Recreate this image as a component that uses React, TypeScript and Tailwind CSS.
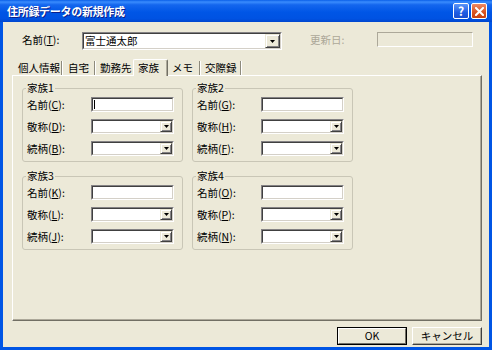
import React from "react";

const U = ({ c }: { c: string }) => (
  <span className="underline underline-offset-[1px] decoration-[1px]">{c}</span>
);

function Sunken({ className, children }: { className: string; children?: React.ReactNode }) {
  return (
    <div
      className={
        "flex shrink-0 border border-t-[#848284] border-l-[#848284] border-b-white border-r-white " + className
      }
    >
      <div className="flex min-w-0 flex-1 items-stretch border border-t-[#404040] border-l-[#404040] border-b-[#D4D0C8] border-r-[#D4D0C8] bg-white">
        {children}
      </div>
    </div>
  );
}

function DropBtn({ className }: { className: string }) {
  return (
    <div
      className={
        "ml-auto flex items-center justify-center border border-t-[#ECE9D8] border-l-[#ECE9D8] border-b-[#404040] border-r-[#404040] bg-[#ECE9D8] shadow-[inset_1px_1px_0_#fff,inset_-1px_-1px_0_#848284] " +
        className
      }
    >
      <svg width="5" height="3" viewBox="0 0 5 3">
        <path d="M0 0h5L2.5 3z" fill="#000" />
      </svg>
    </div>
  );
}

type Row = { name: string; k: string; combo: boolean; cursor?: boolean };

function Group({ title, rows }: { title: string; rows: Row[] }) {
  return (
    <fieldset className="w-[161px] rounded-[3px] border border-[#C9C6B6] pb-[5px] pl-[4px] pt-[3px]">
      <legend className="-ml-[1px] px-[1px] leading-[12px]">{title}</legend>
      <div className="flex flex-col gap-[7px]">
        {rows.map((r) => (
          <div key={r.k} className="flex h-[15px] items-center">
            <span className="w-[64px] shrink-0 whitespace-nowrap leading-[12px]">
              {r.name}(<U c={r.k} />):
            </span>
            <Sunken className="h-[15px] w-[83px]">
              {r.cursor ? <div className="ml-[1px] mt-[1px] h-[9px] w-[1px] bg-black" /> : null}
              {r.combo ? <DropBtn className="w-[12px]" /> : null}
            </Sunken>
          </div>
        ))}
      </div>
    </fieldset>
  );
}

export default function App() {
  const groups: { title: string; rows: Row[] }[] = [
    {
      title: "家族1",
      rows: [
        { name: "名前", k: "C", combo: false, cursor: true },
        { name: "敬称", k: "D", combo: true },
        { name: "続柄", k: "B", combo: true },
      ],
    },
    {
      title: "家族2",
      rows: [
        { name: "名前", k: "G", combo: false },
        { name: "敬称", k: "H", combo: true },
        { name: "続柄", k: "F", combo: true },
      ],
    },
    {
      title: "家族3",
      rows: [
        { name: "名前", k: "K", combo: false },
        { name: "敬称", k: "L", combo: true },
        { name: "続柄", k: "J", combo: true },
      ],
    },
    {
      title: "家族4",
      rows: [
        { name: "名前", k: "O", combo: false },
        { name: "敬称", k: "P", combo: true },
        { name: "続柄", k: "N", combo: true },
      ],
    },
  ];

  return (
    <div className="flex h-[350px] w-[492px] flex-col overflow-hidden bg-[#0055E5] font-[family-name:'Noto_Sans_CJK_JP',sans-serif] text-[10.5px] text-black">
      {/* Title bar */}
      <div className="flex h-[22px] shrink-0 items-center justify-between bg-[linear-gradient(to_bottom,#0A5FE8_0%,#3A8CFD_9%,#1466EE_22%,#0056E6_55%,#0052E2_85%,#0046CE_100%)] pl-[7px] pr-[5px]">
        <span className="text-[11px] font-bold leading-[14px] tracking-[-0.3px] text-white [text-shadow:1px_1px_0_#0A1E8A]">
          住所録データの新規作成
        </span>
        <div className="flex items-center gap-[2px]">
          <div className="flex h-[16px] w-[16px] items-center justify-center rounded-[2px] border border-white bg-[linear-gradient(to_bottom,#5C95F8,#1F5DE3_60%,#1A4FCF)] text-[12px] font-bold leading-none text-white">
            ?
          </div>
          <div className="flex h-[16px] w-[16px] items-center justify-center rounded-[2px] border border-white bg-[linear-gradient(to_bottom,#EE8A66,#D9521F_60%,#C7400F)]">
            <svg width="9" height="9" viewBox="0 0 9 9">
              <path d="M1 1L8 8M8 1L1 8" stroke="#fff" strokeWidth="2" strokeLinecap="square" />
            </svg>
          </div>
        </div>
      </div>

      {/* Body */}
      <div className="mx-[3px] mb-[3px] flex flex-1 flex-col bg-[#ECE9D8]">
        {/* Row 1 */}
        <div className="mt-[10px] flex h-[18px] items-start">
          <span className="ml-[19px] mt-[2px] w-[60px] shrink-0 whitespace-nowrap leading-[12px]">
            名前(<U c="T" />):
          </span>
          <Sunken className="h-[18px] w-[200px]">
            <span className="pl-[1px] leading-[14px]">富士通太郎</span>
            <DropBtn className="w-[15px]" />
          </Sunken>
          <span className="ml-[28px] mt-[2px] w-[67px] shrink-0 leading-[12px] text-[#ACA899]">更新日:</span>
          <div className="h-[15px] w-[96px] border border-t-[#ACA899] border-l-[#ACA899] border-b-white border-r-white" />
        </div>

        {/* Tabs */}
        <div className="ml-[9px] mt-[9px] flex h-[16px] items-end pl-[2px]">
          <div className="flex h-[14px] w-[48px] items-center border-r border-[#8D8A7C] pl-[4px] leading-[12px] shadow-[1px_0_0_#fff]">
            個人情報
          </div>
          <div className="ml-[1px] flex h-[14px] w-[32px] items-center border-r border-[#8D8A7C] pl-[5px] leading-[12px] shadow-[1px_0_0_#fff]">
            自宅
          </div>
          <div className="ml-[1px] flex h-[14px] w-[37px] items-center pl-[4px] leading-[12px]">勤務先</div>
          <div className="relative z-10 -mb-[1px] flex h-[17px] w-[35px] items-center rounded-t-[2px] border-l border-r border-t border-l-white border-r-[#716F64] border-t-white bg-[#ECE9D8] pl-[4px] leading-[12px] shadow-[inset_-1px_0_0_#ACA899]">
            家族
          </div>
          <div className="flex h-[14px] w-[32px] items-center border-r border-[#8D8A7C] pl-[4px] leading-[12px] shadow-[1px_0_0_#fff]">
            メモ
          </div>
          <div className="ml-[1px] flex h-[14px] w-[40px] items-center border-r border-[#8D8A7C] pl-[4px] leading-[12px] shadow-[1px_0_0_#fff]">
            交際録
          </div>
        </div>

        {/* Panel */}
        <div className="ml-[9px] h-[246px] w-[470px] border border-b-[#716F64] border-l-white border-r-[#716F64] border-t-white shadow-[inset_-1px_-1px_0_#ACA899]">
          <div className="grid grid-cols-[161px_161px] gap-x-[9px] gap-y-[8px] pl-[9px] pt-[6px]">
            {groups.map((g) => (
              <Group key={g.title} title={g.title} rows={g.rows} />
            ))}
          </div>
        </div>

        {/* Buttons */}
        <div className="mt-[6px] flex justify-end gap-[5px] pr-[7px]">
          <div className="flex h-[18px] w-[70px] items-center justify-center border border-black leading-[12px]">
            <div className="flex h-full w-full items-center justify-center border border-b-[#716F64] border-l-white border-r-[#716F64] border-t-white">
              OK
            </div>
          </div>
          <div className="flex h-[18px] w-[70px] items-center justify-center border border-b-[#404040] border-l-white border-r-[#404040] border-t-white leading-[12px] shadow-[inset_-1px_-1px_0_#ACA899]">
            キャンセル
          </div>
        </div>
      </div>
    </div>
  );
}
